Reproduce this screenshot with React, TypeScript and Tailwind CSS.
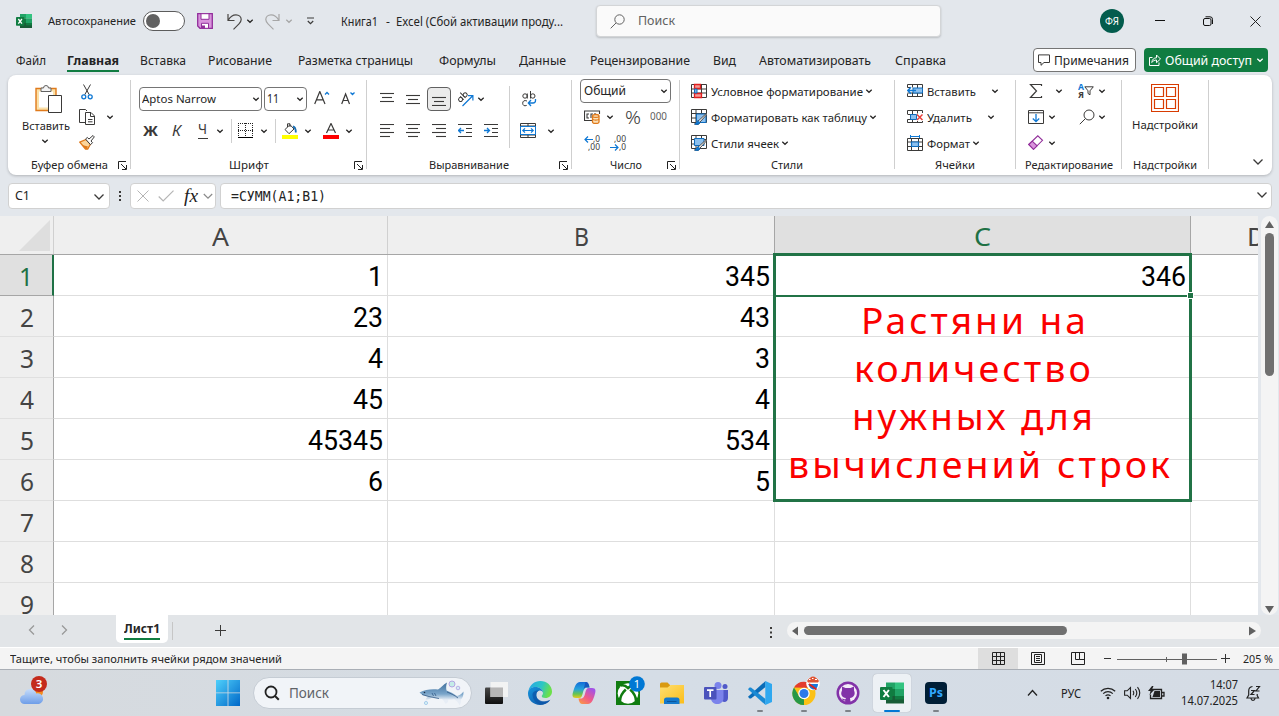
import React, { useLayoutEffect, useRef, useState } from "react";

/** Single-line text whose glyphs are condensed or widened to a given width. */
function Fit({ w, className = "", children }: { w: number; className?: string; children: string }) {
  const ref = useRef<HTMLSpanElement>(null);
  const [scale, setScale] = useState(1);
  useLayoutEffect(() => {
    if (ref.current) setScale(w / parseFloat(getComputedStyle(ref.current).width));
  }, [w]);
  return (
    <span className={"block shrink-0 whitespace-nowrap " + className} style={{ width: w }}>
      <span ref={ref} className="inline-block origin-left" style={{ transform: `scaleX(${scale})` }}>
        {children}
      </span>
    </span>
  );
}

function Icon({ w, h, className = "", children }: { w: number; h: number; className?: string; children: React.ReactNode }) {
  return (
    <svg width={w} height={h} viewBox={`0 0 ${w} ${h}`} fill="none" stroke="#3b3a39" className={"block shrink-0 " + className}>
      {children}
    </svg>
  );
}

const Chev = ({ className = "", c = "#252423" }: { className?: string; c?: string }) => (
  <Icon w={8} h={8} className={className}>
    <path d="M1.3 2.7 4 5.3 6.7 2.7" stroke={c} strokeWidth="1.2" />
  </Icon>
);
const BigChev = ({ className = "" }: { className?: string }) => (
  <Icon w={12} h={8} className={className}>
    <path d="M1.5 1.5 6 6l4.5-4.5" strokeWidth="1.3" />
  </Icon>
);
const Launcher = () => (
  <Icon w={9} h={9}>
    <path d="M.5 8V.5H8M3 3l5 5M8.5 4v4.5H4" stroke="#222" />
  </Icon>
);
const Sep = () => <div className="mt-[5px] h-[89px] w-px shrink-0 bg-[#cfcfcf]" />;

function Group({ className, label, lw, launcher, children }: { className: string; label: string; lw: number; launcher?: boolean; children: React.ReactNode }) {
  return (
    <>
      <section className={"flex h-[100px] shrink-0 flex-col " + className}>
        <div className="h-[80px]">{children}</div>
        <div className="flex h-[20px] items-center">
          <div className="flex flex-1 justify-center">
            <Fit w={lw} className="text-[11.5px] leading-[20px]">{label}</Fit>
          </div>
          {launcher && <div className="-ml-[12px] w-[12px]"><Launcher /></div>}
        </div>
      </section>
      <Sep />
    </>
  );
}

const Save = () => (
  <Icon w={16} h={16} className="ml-[12px]">
    <path d="M.7.7h14.6v14.6H3L.7 13z" fill="#d994dc" stroke="#922f9b" strokeWidth="1.3" />
    <path d="M4 .7h8v5.6H4z" fill="#fff" stroke="#922f9b" />
    <path d="M4.5 15.3v-5h7v5z" fill="#fff" stroke="#922f9b" />
    <path d="M5 12.5h3v3H5z" fill="#922f9b" stroke="none" />
  </Icon>
);
const Undo = ({ flip = false, c }: { flip?: boolean; c: string }) => (
  <Icon w={15} h={17} className={flip ? "ml-[11px] -scale-x-100" : "ml-[14px]"}>
    <path d="M1 1v6.5h6.5M1.2 7.2C3 4 6 1.800 9 1.800c3 0 5.200 2 5.200 4.800 0 2-1 3-2.200 4.200L6.500 16.300" stroke={c} strokeWidth="1.2" />
  </Icon>
);
const ExcelLogo = ({ s, className = "" }: { s: number; className?: string }) => (
  <svg width={s} height={s} viewBox="0 0 24 24" className={"block shrink-0 " + className}>
    <path d="M6 1.500h9V8H6z" fill="#21a366" />
    <path d="M15 1.500h9V8h-9z" fill="#33c481" />
    <path d="M6 8h9v7H6z" fill="#107c41" />
    <path d="M15 8h9v7h-9z" fill="#21a366" />
    <path d="M6 15h18v7.500H6z" fill="#185c37" />
    <path d="M15 15h9v3.500h-9z" fill="#107c41" />
    <rect y="6" width="12.500" height="13" rx="1" fill="#107c41" />
    <path d="m3.500 9 5.400 7M8.900 9 3.500 16" stroke="#fff" strokeWidth="2" />
  </svg>
);

function TitleBar() {
  return (
    <header className="flex h-[42px] shrink-0 items-center pl-[16px]">
      <ExcelLogo s={16} />
      <Fit w={88} className="ml-[16px] text-[11.5px]">Автосохранение</Fit>
      <div className="ml-[7px] flex h-[20px] w-[42px] items-center rounded-full border border-[#5c5c5c] bg-white pl-[2px]">
        <div className="size-[14px] rounded-full bg-[#616161]" />
      </div>
      <Save />
      <Undo c="#484644" />
      <Chev className="ml-[4px]" />
      <Undo flip c="#a6a6a6" />
      <Chev className="ml-[5px]" c="#a6a6a6" />
      <Icon w={9} h={8} className="ml-[13px]">
        <path d="M1 1h7M1.800 4 4.500 6.700 7.200 4" strokeWidth="1.200" />
      </Icon>
      <Fit w={37} className="ml-[26px] pt-px text-[12px]">Книга1</Fit>
      <span className="ml-[8px] pt-px text-[12px]">-</span>
      <Fit w={167} className="ml-[6px] pt-px text-[12px]">Excel (Сбой активации проду...</Fit>
      <div className="mr-[159px] ml-auto flex h-[32px] w-[345px] items-center rounded-[4px] border border-[#d3d5d7] bg-[#fafafa] pl-[13px] shadow-[0_1px_2px_rgba(0,0,0,0.18)]">
        <Icon w={15} h={15}>
          <circle cx="9.500" cy="5.500" r="4.700" stroke="#616161" />
          <path d="M6 9 .7 14.300" stroke="#616161" />
        </Icon>
        <Fit w={37} className="ml-[13px] pt-px text-[12.5px] text-[#616161]">Поиск</Fit>
      </div>
      <div className="flex size-[24px] items-center justify-center rounded-full bg-[#035c4d]">
        <Fit w={14} className="text-[10px] text-white">ФЯ</Fit>
      </div>
      <Icon w={10} h={10} className="ml-[31px]"><path d="M0 4.500h10" stroke="#111" /></Icon>
      <Icon w={10} h={10} className="ml-[38px]">
        <rect x=".5" y="2.500" width="7.500" height="7" rx="1.500" stroke="#111" />
        <path d="M2.500.8H7A2.500 2.500 0 0 1 9.500 3.300V8" stroke="#111" />
      </Icon>
      <Icon w={11} h={11} className="mr-[18px] ml-[37px]"><path d="m.5.5 10 10M10.500.5l-10 10" stroke="#222" /></Icon>
    </header>
  );
}

function Tabs() {
  return (
    <nav className="flex h-[33px] shrink-0 items-start pl-[16px] text-[12px] leading-[18px]">
      <div className="mt-[10px] flex">
        <Fit w={30}>Файл</Fit>
        <div className="ml-[21px] h-[20px] border-b-2 border-[#107c41] font-bold"><Fit w={52}>Главная</Fit></div>
        <Fit w={46} className="ml-[21px]">Вставка</Fit>
        <Fit w={64} className="ml-[22px]">Рисование</Fit>
        <Fit w={115} className="ml-[26px]">Разметка страницы</Fit>
        <Fit w={57} className="ml-[26px]">Формулы</Fit>
        <Fit w={47} className="ml-[23px]">Данные</Fit>
        <Fit w={100} className="ml-[24px]">Рецензирование</Fit>
        <Fit w={23} className="ml-[23px]">Вид</Fit>
        <Fit w={112} className="ml-[23px]">Автоматизировать</Fit>
        <Fit w={51} className="ml-[24px]">Справка</Fit>
      </div>
      <div className="mt-[6px] mr-[11px] ml-auto flex gap-[8px]">
        <div className="flex h-[24px] w-[103px] items-center rounded-[4px] border border-[#757575] bg-white pl-[4px]">
          <Icon w={12} h={12}><path d="M.5.900h11v7.600H6L3 11.300V8.500H.5z" /></Icon>
          <Fit w={75} className="ml-[4px] pt-px text-[12.5px]">Примечания</Fit>
        </div>
        <div className="flex h-[24px] w-[124px] items-center rounded-[4px] bg-[#107c41] pl-[5px] text-white">
          <Icon w={12} h={12}>
            <path d="M3.500 3.500h-3v8h9.500v-3M2.800 8.500C3 5.500 5 3.800 7.500 3.800V1l4 4-4 3.700V6C5.500 6 4 6.800 2.800 8.500z" stroke="#fff" />
          </Icon>
          <Fit w={87} className="ml-[4px] pt-px text-[12.5px]">Общий доступ</Fit>
          <Chev className="ml-[4px]" c="#fff" />
        </div>
      </div>
    </nav>
  );
}

const Lines = ({ rows, className = "" }: { rows: number[][]; className?: string }) => (
  <Icon w={14} h={14} className={className}>
    {rows.map(([y, a, b], i) => <path key={i} d={`M${a} ${y}.5H${b}`} strokeWidth="1.100" />)}
  </Icon>
);

function Clipboard() {
  return (
    <Group className="w-[122px]" label="Буфер обмена" lw={77} launcher>
      <div className="flex">
        <div className="flex w-[65px] flex-col items-end pt-[9px]">
          <Icon w={28} h={30} className="mr-[10px]">
            <path d="M1 4.500h20v22H1z" fill="#fbe1a8" stroke="#e07a1b" strokeWidth="1.400" />
            <path d="M4 7.500h14v16H4z" fill="#fff" stroke="none" />
            <path d="M6 7.500V4h2.500a2.500 2.500 0 0 1 5 0H16v3.500z" fill="#f4f4f4" stroke="#616161" />
            <path d="M13.500 11.500h13v17h-13z" fill="#fff" />
          </Icon>
          <Fit w={48} className="mt-[3px] mr-[3px] text-[11.5px] leading-[18px]">Вставить</Fit>
          <Chev className="mt-[2px] mr-[24px]" />
        </div>
        <div className="flex flex-col pt-[9px] pl-[6px]">
          <Icon w={16} h={16}>
            <path d="m4.500.5 5.800 10.300M11.500.5 5.700 10.800" />
            <circle cx="4.800" cy="12.800" r="2" stroke="#0f78d4" strokeWidth="1.300" />
            <circle cx="11.200" cy="12.800" r="2" stroke="#0f78d4" strokeWidth="1.300" />
          </Icon>
          <div className="mt-[9px] flex items-center">
            <Icon w={16} h={16}>
              <path d="M6 13.500H.5V.5h6L8 2" />
              <path d="M6.500 3.500h5.500l3.500 3.500v8.500h-9zM11.500 4v3.500h4M9 10.500h4.500M9 12.800h4.500" />
            </Icon>
            <Chev className="ml-[11px]" />
          </div>
          <Icon w={16} h={15} className="mt-[10px]">
            <path d="M.8 7.200 7 4.500l4.500 4.500-2.800 5L6.500 14z" fill="#fbd59b" stroke="#e07a1b" strokeWidth="1.300" />
            <path d="m3 10 6 1.500-1.500 3z" fill="#e07a1b" stroke="none" />
            <path d="m6.500 4 1.800-1.500L10 4l4-3.500 1.300 1.400L12 6l1.500 1.700-2 2z" fill="#fff" />
          </Icon>
        </div>
      </div>
    </Group>
  );
}

function FontGroup() {
  return (
    <Group className="w-[235px]" label="Шрифт" lw={40} launcher>
      <div className="flex items-center pt-[12px] pl-[8px]">
        <div className="flex h-[24px] w-[123px] items-center justify-between rounded-[4px] border border-[#757575] pr-[1px] pl-[2px]">
          <Fit w={74} className="text-[11.5px]">Aptos Narrow</Fit><Chev />
        </div>
        <div className="ml-[2px] flex h-[24px] w-[43px] items-center justify-between rounded-[4px] border border-[#757575] pr-[2px] pl-[2px]">
          <Fit w={12} className="text-[12px]">11</Fit><Chev />
        </div>
        <Icon w={16} h={16} className="ml-[7px]">
          <path d="M.7 13 5.800.500 11 13M2.500 8.800h6.700" strokeWidth="1.200" />
          <path d="m11 3.500 2-2 2 2" stroke="#0f78d4" strokeWidth="1.300" />
        </Icon>
        <Icon w={15} h={16} className="ml-[11px]">
          <path d="M.7 13 4.600 3 8.500 13M2 9.500h5.300" strokeWidth="1.200" />
          <path d="m9.500 1.500 2 2 2-2" stroke="#0f78d4" strokeWidth="1.300" />
        </Icon>
      </div>
      <div className="mt-[8px] flex h-[24px] items-center pl-[12px] text-[14px] text-[#3b3a39]">
        <Fit w={15} className="mb-[2px] font-bold">Ж</Fit>
        <Fit w={9} className="mb-[2px] ml-[14px] italic">К</Fit>
        <div className="ml-[17px] h-[16px] w-[10px] border-b border-[#3b3a39]"><Fit w={9} className="text-[14px] leading-[11px]">Ч</Fit></div>
        <Chev className="ml-[8px]" />
        <div className="ml-[7px] h-[24px] w-px bg-[#cfcfcf]" />
        <Icon w={16} h={16} className="ml-[6px]">
          <path d="M0 .5h16M.5 0v15M14.500 0v15M7.500 0v15M0 7.500h16" strokeDasharray="1 1" stroke="#222" />
          <path d="M0 14.500h15" stroke="#000" />
        </Icon>
        <Chev className="ml-[6px]" />
        <div className="ml-[7px] h-[24px] w-px bg-[#cfcfcf]" />
        <Icon w={16} h={16} className="ml-[6px]">
          <path d="m3 6.500 5-4.800 4 4.300-5 4.700zM5.500 4V.8h2.500V4" />
          <path d="M11 3.500c2.300.5 2.800 2 2.800 6" stroke="#1a6fb5" strokeWidth="1.800" />
          <path d="M0 12h16v4H0z" fill="#ffff00" stroke="none" />
        </Icon>
        <Chev className="ml-[6px]" />
        <Icon w={16} h={16} className="ml-[11px]">
          <path d="M3.500 10 8 .5 12.500 10M5 7h6" strokeWidth="1.200" />
          <path d="M0 12h16v4H0z" fill="#f00" stroke="none" />
        </Icon>
        <Chev className="ml-[6px]" />
      </div>
    </Group>
  );
}

const Indent = ({ out = false, className }: { out?: boolean; className: string }) => (
  <Icon w={14} h={14} className={className}>
    <path d="M0 .5h14M8 4.500h6M8 8.500h6M0 12.500h14" />
    <path d={out ? "M6 6.500H.5M3 4 .5 6.500 3 9" : "M0 6.500h5.500M3 4l2.500 2.500L3 9"} stroke="#0f78d4" strokeWidth="1.300" />
  </Icon>
);

function Alignment() {
  return (
    <Group className="w-[204px]" label="Выравнивание" lw={80} launcher>
      <div className="flex">
        <div className="w-[142px]">
          <div className="mt-[12px] flex h-[24px] items-center pl-[13px]">
            <Lines rows={[[1, 0, 14], [5, 2, 12], [9, 0, 14]]} />
            <Lines className="ml-[12px]" rows={[[3, 0, 14], [7, 2, 12], [11, 0, 14]]} />
            <div className="ml-[7px] flex size-[24px] items-center justify-center rounded-[4px] border border-[#616161] bg-[#ebebeb]">
              <Lines rows={[[5, 0, 14], [9, 2, 12], [13, 0, 14]]} />
            </div>
            <Icon w={17} h={16} className="ml-[6px]">
              <g transform="rotate(-45 5 7)">
                <circle cx="3" cy="7" r="2" /><path d="M5 4.500V9.500M7.500 2v7.500" /><circle cx="9.500" cy="7" r="2" />
              </g>
              <path d="M5.500 15 15.500 5M11 4.600h4.900V9.500" stroke="#0f78d4" strokeWidth="1.200" />
            </Icon>
            <Chev className="ml-[3px]" />
          </div>
          <div className="mt-[8px] flex h-[24px] items-center pl-[13px]">
            <Lines rows={[[0, 0, 14], [4, 0, 10], [8, 0, 14], [12, 0, 10]]} />
            <Lines className="ml-[12px]" rows={[[0, 0, 14], [4, 2, 12], [8, 0, 14], [12, 2, 12]]} />
            <Lines className="ml-[12px]" rows={[[0, 0, 14], [4, 4, 14], [8, 0, 14], [12, 4, 14]]} />
            <Indent out className="ml-[12px]" />
            <Indent className="ml-[12px]" />
          </div>
        </div>
        <div className="mt-[11px] h-[62px] w-px bg-[#cfcfcf]" />
        <div className="pl-[10px]">
          <Icon w={16} h={16} className="mt-[16px] ml-[2px]">
            <circle cx="3" cy="5" r="2.200" /><path d="M5.300 2.500v5M8.500 0v7.500M5 10c-2.800-1.200-4.300.2-4.300 2.200 0 2 1.500 3.300 4 2.200" /><circle cx="10.800" cy="5" r="2.200" />
            <path d="M13.500 8v1.500c0 1.500-1 2.500-2.500 2.500H6.500M9 9l-2.700 3L9 15" stroke="#0f78d4" strokeWidth="1.300" />
          </Icon>
          <div className="mt-[16px] flex items-center">
            <Icon w={16} h={15}>
              <path d="M.5.5h15v14H.5zM.5 3h15M.5 12h15M8 .5V3M8 12v2.500" />
              <path d="M.5 3.500h15v8H.5z" fill="#fff" stroke="#0f78d4" />
              <path d="M3 7.500h10M5 5.300 2.800 7.500 5 9.700M11 5.300l2.200 2.200L11 9.700" stroke="#0f78d4" strokeWidth="1.200" />
            </Icon>
            <Chev className="ml-[11px]" />
          </div>
        </div>
      </div>
    </Group>
  );
}

const Decimal = ({ more, className = "" }: { more?: boolean; className?: string }) => (
  <div className={"flex w-[17px] shrink-0 flex-col items-end text-[9px] leading-[8px] text-[#3b3a39] " + className}>
    <div className="flex h-[8px] items-center">
      {more && <Icon w={9} h={7}><path d="M9 3.500H1M4 .5l-3 3 3 3" stroke="#0f78d4" strokeWidth="1.200" /></Icon>}
      <Fit w={more ? 7 : 12}>{more ? ",0" : ",00"}</Fit>
    </div>
    <div className="flex h-[8px] items-center">
      {!more && <Icon w={9} h={7}><path d="M0 3.500h8M5 .5l3 3-3 3" stroke="#0f78d4" strokeWidth="1.200" /></Icon>}
      <Fit w={more ? 12 : 7}>{more ? ",00" : ",0"}</Fit>
    </div>
  </div>
);

function NumberGroup() {
  return (
    <Group className="w-[107px]" label="Число" lw={32} launcher>
      <div className="mt-[4px] ml-[8px] flex h-[24px] w-[91px] items-center justify-between rounded-[4px] border border-[#757575] pr-[2px] pl-[3px]">
        <Fit w={42} className="text-[12px]">Общий</Fit><Chev />
      </div>
      <div className="flex h-[28px] items-center pl-[12px]">
        <Icon w={17} h={14}>
          <path d="M8 10.500H.5V1h15v3M5 4H3v4h2M7 8V4h2M11 4.500V3" strokeWidth="1.100" />
          <path d="M8.500 6c0-2 6.500-2 6.500 0v6c0 2-6.500 2-6.500 0z" fill="#fbe1b8" stroke="#e07a1b" strokeWidth="1.300" />
          <path d="M8.500 6.300c1 1.500 5.500 1.500 6.500 0M8.500 9c1 1.500 5.500 1.500 6.500 0" stroke="#e07a1b" strokeWidth="1.200" />
        </Icon>
        <Chev className="ml-[5px]" />
        <Fit w={16} className="ml-[11px] text-[19px] leading-[20px] font-light text-[#3b3a39]">%</Fit>
        <Fit w={17} className="ml-[9px] text-[10.5px] text-[#616161]">000</Fit>
      </div>
      <div className="flex h-[24px] items-center pl-[11px]">
        <Decimal more />
        <Decimal className="ml-[9px]" />
      </div>
    </Group>
  );
}

function TableIcon({ kind }: { kind: "cond" | "table" | "cell" | "ins" | "del" | "fmt" }) {
  const blue = "#0f6cbd";
  return (
    <Icon w={16} h={16}>
      {kind === "cond" && <>
        <path d="M.5 1.500h15v13H.5zM.5 6h15M.5 10h15M10.500 1.500v13M5.500 1.500v13" />
        <path d="M3.500 1.500h6v4h-6zM3.500 10.500h7v4h-7z" fill="#f59a95" stroke="#e02020" strokeWidth="1.300" />
        <path d="M6 6v4H3.500V6z" fill="#7db4e8" stroke={blue} />
      </>}
      {(kind === "table" || kind === "cell") && <>
        <path d="M.5.5h15v13H.5zM.5 4.500h15M.5 9h6M5 .5v13M10.500.5v4" />
        <path d={kind === "table" ? "M5.500 5h9.500v8.500H5.500z" : "M3.500 3.500h9.500v7H3.500z"} fill="#8cc0ee" stroke={blue} />
        <path d="m15.300 4.500-7 6.500-1.300 1c-2 0-1.500 2.500-3.500 3 2.500 1 5.500.5 5.500-2l6.800-7.500z" fill="#fff" stroke="#484644" />
        <path d="M7.300 12c-2 0-1.500 2.500-3.500 3 2.500.9 4.800.2 5-1.600z" fill="#0f78d4" stroke={blue} />
      </>}
      {kind === "ins" && <>
        <path d="M.5 4.500v-3h15v12H.5v-3M.5 10h15M5.500 1.500v3M10.500 1.500v12M5.500 9.500v4M.5 4.500H3" />
        <path d="M6 5h9.500v5H6z" fill="#8cc0ee" stroke={blue} />
        <path d="M9 7.500H1M4 4.300.8 7.500 4 10.700" stroke="#0f78d4" strokeWidth="1.400" />
      </>}
      {kind === "del" && <>
        <path d="M.5 5V1.500h15V4M.5 10.500v3h15V12M.5 5.500H5M.5 10.500H5M5.500 1.500v4M5.500 10.500v3M10.500 1.500v3M10.500 12v2" />
        <path d="M3.500 5.500h6v5h-6z" fill="#8cc0ee" stroke={blue} />
        <path d="m10 5.500 5.500 5.500M15.500 5.500 10 11" stroke="#e8403c" strokeWidth="1.500" />
      </>}
      {kind === "fmt" && <>
        <path d="M.5 3.500h15v12H.5zM.5 7h15M.5 11.500h15M4.500 3.500v12M11.500 3.500v12" />
        <path d="M4.500 7h7v4.500h-7z" fill="#8cc0ee" stroke={blue} strokeWidth="1.200" />
        <path d="M3.500 1.500h9M3.500 0v3M12.500 0v3" stroke="#0f78d4" />
      </>}
    </Icon>
  );
}

const Command = ({ kind, w, text, far }: { kind: "cond" | "table" | "cell" | "ins" | "del" | "fmt"; w: number; text: string; far?: boolean }) => (
  <div className="flex h-[26px] items-center">
    <TableIcon kind={kind} />
    <Fit w={w} className="ml-[4px] pt-px text-[11.5px]">{text}</Fit>
    <Chev className={far ? "ml-[15px]" : "ml-[2px]"} />
  </div>
);

function Ribbon() {
  return (
    <div className="mr-[7px] ml-[8px] flex h-[100px] shrink-0 rounded-[8px] bg-white shadow-[0_1px_3px_rgba(0,0,0,0.22)]">
      <Clipboard />
      <FontGroup />
      <Alignment />
      <NumberGroup />
      <Group className="w-[214px]" label="Стили" lw={32}>
        <div className="pt-[3px] pl-[11px]">
          <Command kind="cond" w={152} text="Условное форматирование" />
          <Command kind="table" w={156} text="Форматировать как таблицу" />
          <Command kind="cell" w={68} text="Стили ячеек" />
        </div>
      </Group>
      <Group className="w-[120px]" label="Ячейки" lw={40}>
        <div className="pt-[3px] pl-[12px]">
          <Command kind="ins" w={49} text="Вставить" far />
          <Command kind="del" w={45} text="Удалить" far />
          <Command kind="fmt" w={43} text="Формат" />
        </div>
      </Group>
      <Group className="w-[105px]" label="Редактирование" lw={88}>
        <div className="pt-[3px] pl-[12px]">
          <div className="flex h-[26px] items-center">
            <Icon w={16} h={16}><path d="M13.500 3V1.500H2.500l6 6.500-6 6.500h11V13" strokeWidth="1.200" /></Icon>
            <Chev className="ml-[11px]" />
            <div className="ml-[15px] flex w-[16px]">
              <div className="flex flex-col text-[9px] leading-[8px] font-bold text-[#3b3a39]">
                <Fit w={6} className="h-[8px] text-[#0f78d4]">А</Fit><Fit w={6} className="h-[8px]">Я</Fit>
              </div>
              <Icon w={10} h={11} className="mt-[3px]"><path d="M.8.800h8.500L6 4.800v4L4 7.500V4.800z" /></Icon>
            </div>
            <Chev className="ml-[4px]" />
          </div>
          <div className="flex h-[26px] items-center">
            <Icon w={16} h={14}>
              <path d="M.5.500h15v13H.5zM.5 2.800h15" />
              <path d="M8 4v7.500M4.800 8.500 8 11.700l3.200-3.200" stroke="#0f78d4" strokeWidth="1.300" />
            </Icon>
            <Chev className="ml-[4px]" />
            <Icon w={16} h={16} className="ml-[23px]"><circle cx="10" cy="6" r="5" /><path d="M6.500 9.500.8 15.200" /></Icon>
            <Chev className="ml-[3px]" />
          </div>
          <div className="flex h-[26px] items-center">
            <Icon w={16} h={16}>
              <path d="M.8 9.500 9.800.800l4.700 4.500-9 9z" fill="#fff" stroke="#922f9b" strokeWidth="1.100" />
              <path d="m.8 9.500 3.500-3.300 4.800 4.600-3.600 3.500z" fill="#d994dc" stroke="#922f9b" strokeWidth="1.100" />
            </Icon>
            <Chev className="ml-[4px]" />
          </div>
        </div>
      </Group>
      <Group className="w-[86px]" label="Надстройки" lw={64}>
        <div className="flex flex-col items-center pt-[9px]">
          <Icon w={28} h={28}>
            <path d="M.5.500h27v27H.5zM3.500 3.500h9v9h-9zM15.500 3.500h9v9h-9zM3.500 15.500h9v9h-9zM15.500 15.500h9v9h-9z" stroke="#d83b01" strokeWidth="1.200" />
          </Icon>
          <Fit w={66} className="mt-[4px] text-[11.5px] leading-[18px]">Надстройки</Fit>
        </div>
      </Group>
      <BigChev className="mt-[83px] mr-[8px] ml-auto" />
    </div>
  );
}

function FormulaBar() {
  const box = "flex h-[26px] items-center rounded-[4px] border border-[#d1d1d1] bg-white ";
  return (
    <div className="mt-[8px] flex h-[33px] shrink-0 items-start pl-[8px]">
      <div className={box + "w-[102px] justify-between pr-[4px] pl-[6px]"}>
        <Fit w={15} className="text-[12.5px]">C1</Fit><BigChev className="mt-[2px]" />
      </div>
      <Icon w={4} h={12} className="mt-[7px] ml-[8px]"><path d="M1 1h2v2H1zM1 5h2v2H1zM1 9h2v2H1z" fill="#3b3a39" stroke="none" /></Icon>
      <div className={box + "ml-[8px] w-[86px] pl-[6px]"}>
        <Icon w={12} h={12}><path d="m.5.500 11 11M11.500.500l-11 11" stroke="#b5b5b5" /></Icon>
        <Icon w={16} h={12} className="ml-[9px]"><path d="m.7 6.500 4.500 4.500L15.500.700" stroke="#b5b5b5" strokeWidth="1.200" /></Icon>
        <Fit w={14} className="ml-[10px] font-['Liberation_Serif',serif] text-[18px] leading-[18px] text-[#222] italic">fx</Fit>
        <Icon w={10} h={8} className="ml-[5px]"><path d="m.8 2 4.200 4.200L9.200 2" stroke="#8a8a8a" strokeWidth="1.200" /></Icon>
      </div>
      <div className={box + "ml-[4px] w-[1052px] justify-between pr-[3px] pl-[10px]"}>
        <Fit w={95} className="font-['DejaVu_Sans_Mono',monospace] text-[13.5px]">=СУММ(A1;B1)</Fit>
        <BigChev className="mb-[2px]" />
      </div>
    </div>
  );
}

const DATA = [["1", "345", "346"], ["23", "43", ""], ["4", "3", ""], ["45", "4", ""], ["45345", "534", ""], ["6", "5", ""], ["", "", ""], ["", "", ""], ["", "", ""]];

function Cell({ v, className }: { v: string; className: string }) {
  return (
    <div className={"flex h-[41px] shrink-0 items-center justify-end border-r border-b border-[#dedede] pr-[4px] font-[Roboto,sans-serif] text-[28px] leading-[41px] text-black " + className}>
      {v && <Fit w={v.length * 15} className="pt-[3px]">{v}</Fit>}
    </div>
  );
}

function Sheet() {
  const head = "flex shrink-0 items-center justify-center border-r pt-[3px] ";
  return (
    <div className="relative h-[399px] w-[1258px] shrink-0 overflow-hidden bg-white">
      <div className="flex h-[39px] border-b border-[#a6a6a6] bg-[#efefef] text-[26px] text-[#444]">
        <div className="flex w-[54px] shrink-0 items-center justify-end border-r border-[#d0d0d0] pr-[3px]">
          <Icon w={31} h={31}><path d="M31 0v31H0z" fill="#dedede" stroke="none" /></Icon>
        </div>
        <div className={head + "w-[334px] border-[#d0d0d0]"}><Fit w={17}>A</Fit></div>
        <div className={head + "w-[387px] border-[#a6a6a6]"}><Fit w={15}>B</Fit></div>
        <div className={head + "w-[416px] border-[#a6a6a6] bg-[#e0e0e0] text-[#1e7145]"}><Fit w={17}>C</Fit></div>
        <div className="flex items-center pt-[3px] pl-[56px]"><Fit w={19}>D</Fit></div>
      </div>
      {DATA.map((row, i) => (
        <div key={i} className="flex">
          <div className={"flex h-[41px] w-[54px] shrink-0 items-center justify-center border-b text-[26px] leading-[41px] " + (i === 0 ? "border-r-2 border-r-[#1e7145] border-b-[#a6a6a6] bg-[#e0e0e0] text-[#1e7145]" : "border-r border-r-[#a6a6a6] border-b-[#e0e0e0] bg-[#efefef] text-[#444]")}>
            <Fit w={14} className="pt-[2px]">{String(i + 1)}</Fit>
          </div>
          <Cell v={row[0]} className="w-[334px]" />
          <Cell v={row[1]} className="w-[387px]" />
          <Cell v={row[2]} className="w-[416px]" />
          <Cell v="" className="w-[68px]" />
        </div>
      ))}
      <div className="absolute top-[37px] left-[773px] h-[249px] w-[419px] border-[3px] border-[#217346]">
        <div className="h-[41px] w-[411px] border-b-2 border-[#217346]" />
        <div className="absolute top-[36px] -right-[5px] size-[7px] border border-white bg-[#217346]" />
        <div className="-mt-[1px] flex flex-col items-start text-[37px] leading-[48px] tracking-[3px] text-[#fb0000]">
          <Fit w={228} className="ml-[85px]">Растяни на</Fit>
          <Fit w={240} className="ml-[78px]">количество</Fit>
          <Fit w={244} className="ml-[76px]">нужных для</Fit>
          <Fit w={385} className="ml-[12px]">вычислений строк</Fit>
        </div>
      </div>
    </div>
  );
}

function SheetTabs() {
  return (
    <div className="flex h-[32px] shrink-0 items-start bg-[#e2e5e8]">
      <Icon w={8} h={10} className="mt-[10px] ml-[28px]"><path d="M6 .500 1.500 5 6 9.500" stroke="#999" strokeWidth="1.300" /></Icon>
      <Icon w={8} h={10} className="mt-[10px] ml-[24px]"><path d="M2 .500 6.500 5 2 9.500" stroke="#999" strokeWidth="1.300" /></Icon>
      <div className="ml-[48px] flex h-[28px] w-[52px] justify-center rounded-b-[5px] bg-white">
        <div className="h-[25px] border-b-2 border-[#107c41] text-[12.5px] leading-[27px] font-bold text-[#262626]"><Fit w={36}>Лист1</Fit></div>
      </div>
      <div className="mt-[7px] ml-[4px] h-[18px] w-px bg-[#c6c6c6]" />
      <Icon w={11} h={11} className="mt-[10px] ml-[42px]"><path d="M5.500 0v11M0 5.500h11" /></Icon>
      <Icon w={2} h={11} className="mt-[12px] ml-auto"><path d="M0 0h2v2H0zM0 4.500h2v2H0zM0 9h2v2H0z" fill="#3b3a39" stroke="none" /></Icon>
      <div className="mt-[7px] mr-[18px] ml-[15px] flex h-[17px] w-[474px] items-center rounded-full bg-[#f4f4f4] pr-[5px] pl-[5px]">
        <Icon w={6} h={10}><path d="M6 .500v9L0 5z" fill="#616161" stroke="none" /></Icon>
        <div className="ml-[6px] h-[9px] w-[263px] rounded-full bg-[#707070]" />
        <Icon w={7} h={10} className="ml-auto"><path d="M0 .500v9L7 5z" fill="#616161" stroke="none" /></Icon>
      </div>
    </div>
  );
}

function StatusBar() {
  return (
    <div className="flex h-[23px] shrink-0 items-center border-t border-b border-t-white border-b-[#a9aeb5] bg-[#f4f4f4] pl-[10px] text-[11.5px]">
      <Fit w={272} className="pt-px">Тащите, чтобы заполнить ячейки рядом значений</Fit>
      <div className="ml-auto flex h-full w-[40px] items-center justify-center bg-[#dedede]">
        <Icon w={13} h={13}><path d="M.5.500h12v12H.5zM.5 4.500h12M.5 8.500h12M4.500.500v12M8.500.500v12" stroke="#222" /></Icon>
      </div>
      <Icon w={14} h={13} className="ml-[13px]"><path d="M.5.500h13v12H.5zM3.500 2.500h7v8h-7zM5 4.500h4M5 6.500h4M5 8.500h4" stroke="#222" /></Icon>
      <Icon w={14} h={13} className="ml-[26px]"><path d="M.5.500h13v12H.5zM4.500.500v7h4v-7M8.500 7.500h5" stroke="#222" /></Icon>
      <Icon w={117} h={13} className="ml-[19px]">
        <path d="M13 7.500h100M62.500 5v5" stroke="#616161" />
        <path d="M78 1.500h5v11h-5z" fill="#616161" stroke="none" />
        <path d="M0 6.500h7" stroke="#333" />
      </Icon>
      <Icon w={9} h={9}><path d="M0 4.500h9M4.500 0v9" stroke="#333" /></Icon>
      <Fit w={30} className="mr-[6px] ml-[13px] pt-px">205 %</Fit>
    </div>
  );
}

function Slot({ children, dot, active }: { children: React.ReactNode; dot?: boolean; active?: boolean }) {
  return (
    <div className="flex h-[46px] w-[44px] shrink-0 flex-col items-center">
      <div className={"mt-[4px] flex h-[38px] w-[38px] flex-col items-center rounded-[4px] pt-[7px] " + (active ? "bg-[#edf1f5] shadow-[0_0_1px_rgba(0,0,0,0.3)]" : "")}>
        {children}
        {dot && <div className="mt-[5px] h-[3px] w-[6px] rounded-full bg-[#7d8288]" />}
        {active && <div className="mt-[5px] h-[3px] w-[16px] rounded-full bg-[#0078d4]" />}
      </div>
    </div>
  );
}

const Pic = ({ children }: { children: React.ReactNode }) => (
  <svg width="24" height="24" viewBox="0 0 24 24" className="block shrink-0 overflow-visible">{children}</svg>
);

function Taskbar() {
  return (
    <footer className="flex h-[46px] shrink-0 items-center bg-[linear-gradient(90deg,#d6dade,#d5dde6_50%,#d5dce5)]">
      <svg width="30" height="30" viewBox="0 0 30 30" className="mb-[5px] ml-[19px] block">
        <defs><linearGradient id="cl" x1="0" y1="0" x2="0" y2="1"><stop stopColor="#c5dcfa" /><stop offset="1" stopColor="#6e9de8" /></linearGradient></defs>
        <circle cx="19" cy="16" r="5" fill="#f58b1e" />
        <path d="M5.500 28a4.500 4.500 0 0 1 0-9 6 6 0 0 1 11.800-1.500A5.300 5.300 0 0 1 20 28z" fill="url(#cl)" />
        <circle cx="20" cy="8" r="8" fill="#c42b1c" />
        <text x="20" y="12.200" textAnchor="middle" fontSize="11.500" fontWeight="600" fill="#fff">3</text>
      </svg>
      <div className="ml-[157px] flex">
        <Slot>
          <svg width="24" height="28" viewBox="0 0 24 28" className="-mt-[3px] block">
            <defs><linearGradient id="wn" x1="0" y1="0" x2="1" y2="1"><stop stopColor="#4fd0fb" /><stop offset="1" stopColor="#0067c8" /></linearGradient></defs>
            <path d="M0 2h11.600v12.500H0zM12.400 2H24v12.500H12.400zM0 15.300h11.600V28H0zM12.400 15.300H24V28H12.400z" fill="url(#wn)" />
          </svg>
        </Slot>
      </div>
      <div className="ml-[3px] flex h-[32px] w-[219px] shrink-0 items-center rounded-full border border-[#c5ccd4] bg-[#f1f4f8] pl-[10px]">
        <Icon w={16} h={16}><circle cx="7" cy="7" r="5.500" stroke="#222" strokeWidth="1.800" /><path d="m11 11 3.800 3.800" stroke="#222" strokeWidth="2" /></Icon>
        <Fit w={40} className="ml-[9px] text-[13.5px] text-[#5f6368]">Поиск</Fit>
        <svg width="46" height="26" viewBox="0 0 46 26" className="ml-[90px] block">
          <defs><linearGradient id="sh" x1="0" y1="0" x2="0" y2="1"><stop stopColor="#3f6f9c" /><stop offset=".5" stopColor="#7aa5ca" /><stop offset=".75" stopColor="#e7edf5" /></linearGradient></defs>
          <path d="M.5 12.500C6 9.500 12 9 19 9.500c3-1.500 5-5 9-7-1 3-1 5.500-.500 8 4 1.500 7.500 3.500 10.500 5.500 2-.500 4-1.500 6.500-4.500.200 4-1 6.500-2.500 8 .300 2.300-.5 4-1.300 6-1.200-3.300-3.200-4.800-5.700-6.300-2 .600-4 .700-6 .500 1 1.500-1 3.500-2.500 4-1-1.500-2-3.500-3.500-4.700-4 0-8-.500-10-1.300L6.500 21c0-1.500.5-3 2.500-4.200-3-.800-6-1.500-8.500-4.300z" fill="url(#sh)" />
          <path d="m13 13 1.500 3M15.500 13l1.500 3M28 12c4 1.500 8 3.500 11 6M3 14.500l7 2 10 2" stroke="#335a86" strokeWidth=".8" fill="none" />
          <circle cx="5.500" cy="12.500" r=".8" fill="#1d2f45" />
          <circle cx="33" cy="4" r="3" fill="#c4ece8" stroke="#b4a5e3" /><circle cx="39" cy="8" r="1.800" fill="#d4edf4" stroke="#b7b1e8" /><circle cx="7" cy="23" r="1.600" fill="#d4f0f4" stroke="#93bde6" strokeWidth=".7" />
        </svg>
      </div>
      <div className="ml-[2px] flex">
        <Slot>
          <Pic>
            <defs><linearGradient id="tv" x1="0" y1="0" x2="0" y2="1"><stop stopColor="#484848" /><stop offset="1" stopColor="#0e0e0e" /></linearGradient></defs>
            <rect x="1" y="6.500" width="18" height="16.500" rx="1" fill="url(#tv)" />
            <path d="M6.500 1H24v15H6.500z" fill="#f3f3f3" opacity=".95" /><path d="M6.500 6.500H19V16H6.500z" fill="#b5b5b5" />
          </Pic>
        </Slot>
        <Slot>
          <Pic>
            <defs>
              <linearGradient id="e1" x1="0" y1="0" x2="1" y2=".3"><stop stopColor="#28a5e8" /><stop offset=".6" stopColor="#2dc6c4" /><stop offset="1" stopColor="#6be04a" /></linearGradient>
              <linearGradient id="e2" x1="0" y1="0" x2="1" y2="1"><stop stopColor="#1695dd" /><stop offset="1" stopColor="#0d4da0" /></linearGradient>
            </defs>
            <path d="M.500 10C1.500 4 6.500 0 12.300 0 19 0 24 4.800 24 10.500c0 4-3 6.500-6.500 6.500-2.600 0-4-1-3.700-2.300.9-1 1.200-1.900 1.200-2.900C15 8.500 11.500 6 7.500 6 4.500 6 2 7.300.500 10z" fill="url(#e1)" />
            <path d="M0 12.500C0 8.500 3 6 7.500 6c4 0 7.500 2.500 7.500 5.800-.500-1.800-2-2.500-3.300-2.300-2.200.3-3.600 2.200-3.400 4.900.3 4 4.200 6.900 8.700 6.400 2-.2 3.700-1 5.300-2C20 22 16.500 24 12.200 24 5.300 24 0 19 0 12.500z" fill="url(#e2)" />
            <path d="M4.500 14c.3 5 4 9 8.500 9.800C17 23.800 20.500 21.500 22.300 18.800c-5.800 3.200-13.500.700-14-4.400-.1-2.500 1-4.200 3-4.900-4-.5-7 1.500-6.800 4.500z" fill="#0c55a8" opacity=".75" />
          </Pic>
        </Slot>
        <Slot>
          <Pic>
            <defs>
              <linearGradient id="c1" x1="0" y1="0" x2="0" y2="1"><stop stopColor="#126bd8" /><stop offset=".45" stopColor="#25a2dc" /><stop offset=".75" stopColor="#67c54f" /><stop offset="1" stopColor="#e8c91c" /></linearGradient>
              <linearGradient id="c2" x1=".7" y1="0" x2="0" y2="1"><stop stopColor="#a353e6" /><stop offset=".5" stopColor="#f05a88" /><stop offset="1" stopColor="#fba13c" /></linearGradient>
            </defs>
            <path d="M17.500 6.500C17 3 16 1 13.500 1H8C4.500 1 3 5 1.500 9.500.2 13.500-.5 17 4 17h3c2.500 0 3-2 3.800-5 .700-3 1.700-5.500 4-5.500z" fill="url(#c1)" />
            <path d="M6.500 17.500C7 21 8 23 10.500 23H16c3.500 0 5-4 6.500-8.500 1.300-4 2-7.500-2.500-7.500h-3c-2.500 0-3 2-3.800 5-.700 3-1.700 5.500-4 5.500z" fill="url(#c2)" />
            <path d="M13.500 1c2.500 0 3.500 2 4 5.500h-3c-1.500 0-2.300.6-3 2L13 3z" fill="#164cb5" opacity=".8" />
          </Pic>
        </Slot>
        <Slot>
          <Pic>
            <path d="M0 0h24v24H0z" fill="#107c10" />
            <circle cx="12" cy="12.500" r="10.300" fill="#fff" />
            <path d="M12 5C9.500 3 6.500 1.800 4.800 3.800 7 4 9.500 6 12 8.300 14.500 6 17 4 19.200 3.800 17.500 1.800 14.500 3 12 5zM8.500 7.500 4 20.500C1 15 3.500 10 8.500 7.500zM15.500 7.500l4.500 13c3-5.500.500-10.500-4.500-13zM12 11.500c-3.500 3-6 6.500-6.500 9.500 4 3 9 3 13 0-.5-3-3-6.500-6.500-9.500z" fill="#107c10" opacity="0" />
            <path d="M4.500 4.500C7 3.800 10 5 12 7c2-2 5-3.200 7.500-2.500M9.800 8.500C6 12 4 16 4 20M14.200 8.500C18 12 20 16 20 20" stroke="#107c10" strokeWidth="2.500" fill="none" />
            <circle cx="21" cy="3" r="7.800" fill="#0078d4" />
            <text x="21" y="7" textAnchor="middle" fontSize="11" fill="#fff">1</text>
          </Pic>
        </Slot>
        <Slot>
          <Pic>
            <defs><linearGradient id="fo" x1="0" y1="0" x2="1" y2="1"><stop stopColor="#ffdf72" /><stop offset="1" stopColor="#fbbd19" /></linearGradient></defs>
            <path d="M0 3a1.500 1.500 0 0 1 1.500-1.500h6L10 4v4H0z" fill="#d99a12" />
            <path d="M0 6.500h7.500L10.500 4H24v18.500H0z" fill="url(#fo)" />
            <path d="M4 23v-4a2.500 2.500 0 0 1 2.500-2.500H17a2.500 2.500 0 0 1 2.500 2.500v4z" fill="#1479cc" /><path d="M7 20.500h9.500" stroke="#0a559b" />
          </Pic>
        </Slot>
        <Slot>
          <Pic>
            <circle cx="14" cy="4.500" r="3.500" fill="#7b83eb" /><circle cx="21" cy="5.500" r="2.500" fill="#5059c9" />
            <path d="M15 9h9v8c0 5-6.500 5-7 1z" fill="#5059c9" /><path d="M7 9h12.500v8c0 8-12.500 8-12.500 0z" fill="#7b83eb" />
            <rect y="6" width="12.500" height="12.500" rx="1" fill="#4b53bc" /><path d="M3 9.200h6.500M6.200 9v7" stroke="#fff" strokeWidth="1.700" />
          </Pic>
        </Slot>
        <Slot dot>
          <Pic>
            <path d="M17.500 0v6L3 17.500H1.500L0 15.800z" fill="#0a6cb8" />
            <path d="M17.500 24v-6L3 6.500H1.500L0 8.200z" fill="#1a8ad4" />
            <path d="M17.300 0 24 3v18l-6.700 3z" fill="#2fa8f0" />
          </Pic>
        </Slot>
        <Slot dot>
          <Pic>
            <circle cx="12" cy="12.500" r="11.500" fill="#fbc116" />
            <path d="M2 6.500a11.500 11.500 0 0 1 20 .300H12z" fill="#e33b2e" /><path d="M2 6.500 7.500 16l4.500 1.500L12 24A11.500 11.500 0 0 1 2 6.500z" fill="#279847" />
            <circle cx="12" cy="12.500" r="5.700" fill="#fff" /><circle cx="12" cy="12.500" r="4.500" fill="#2d79ea" />
            <circle cx="21" cy="2.500" r="6.800" fill="#fff" /><path d="M15 0q6-9 12 0l-1 1.500H16z" fill="#df5535" /><path d="M16.500 3h9.500c0 3-1.500 5-4 5.500-3 0-5-2.500-5.500-5.500z" fill="#1679df" /><path d="m17 3 7.500 5.500" stroke="#db2520" strokeWidth="2" />
            <path d="M17-1.500h1.500M20-2.500h1.500M23-1.500h2" stroke="#fff" />
          </Pic>
        </Slot>
        <Slot dot>
          <Pic>
            <circle cx="12" cy="12" r="11.500" fill="#8232a8" /><circle cx="12" cy="12" r="9" fill="#f4ebf8" />
            <path d="M6 5.500 9.500 7h5L18 5.500v4c2 4-.5 7-4 7.500l.7 5h-5.500v-2.500c-2 .5-3-1-3.500-2 2 .2 2 .8 3.800.8l.4-1.300C6 16.500 4 13.500 6 9.500z" fill="#8232a8" />
          </Pic>
        </Slot>
        <Slot active><ExcelLogo s={24} /></Slot>
        <Slot dot>
          <Pic>
            <rect x="1" y="1" width="22" height="22" rx="4" fill="#001e36" />
            <text x="12" y="16" textAnchor="middle" fontSize="12" fontWeight="700" fill="#31a8ff" textLength="14" lengthAdjust="spacingAndGlyphs">Ps</text>
          </Pic>
        </Slot>
      </div>
      <Icon w={11} h={8} className="mr-[23px] ml-auto"><path d="m1 6.500 4.500-5 4.500 5" stroke="#222" strokeWidth="1.300" /></Icon>
      <Fit w={20} className="pt-px text-[12px] text-[#222]">РУС</Fit>
      <Icon w={16} h={14} className="ml-[19px]">
        <path d="M.8 5.200a10.400 10.400 0 0 1 14.400 0M3.200 7.600a7 7 0 0 1 9.600 0M5.500 9.900a3.700 3.700 0 0 1 5 0" stroke="#222" strokeWidth="1.200" /><circle cx="8" cy="12" r="1.300" fill="#222" stroke="none" />
      </Icon>
      <Icon w={17} h={14} className="ml-[8px]">
        <path d="M.6 4.800h2.600L6.500 1.500v11L3.200 9.200H.6zM9 4.800q1.500 2.200 0 4.400M11.300 3q3 4 0 8M13.500 1.200q4.500 5.800 0 11.600" stroke="#222" strokeWidth="1.100" />
      </Icon>
      <Icon w={17} h={14} className="ml-[7px]">
        <path d="M3 3.500h10.500v9H2.500v-4M14 6.500h2v3.500h-2" stroke="#222" strokeWidth="1.300" /><path d="M6.500 5h5.500v6H4.500z" fill="#222" stroke="none" /><path d="M4 0 0 5h2.500L1.500 9 6 4H3.800L5.500 0z" fill="#222" stroke="none" />
      </Icon>
      <div className="ml-[16px] flex w-[57px] flex-col items-end text-[12px] leading-[16px] text-[#222]">
        <Fit w={28}>14:07</Fit>
        <Fit w={57}>14.07.2025</Fit>
      </div>
      <Icon w={15} h={17} className="mr-[18px] ml-[8px]">
        <path d="M6.500 1.500C4 1.800 2.700 3.500 2.700 6v4L1 13h11.500l-1.300-2.500V9M5 13.500c.3 2.500 3.700 2.500 4 0" stroke="#222" strokeWidth="1.200" /><path d="M5 5.500h3.500L5 9.500h3.500M10 1.500h3.500L10 6h3.500" stroke="#222" strokeWidth="1.200" />
      </Icon>
    </footer>
  );
}

export default function App() {
  return (
    <div className="flex h-[716px] w-[1279px] flex-col overflow-hidden bg-[#e3e7ec] font-['Noto_Sans','Open_Sans',sans-serif] text-[#242424]">
      <TitleBar />
      <Tabs />
      <Ribbon />
      <FormulaBar />
      <div className="flex h-[399px] shrink-0">
        <Sheet />
        <div className="ml-[3px] flex w-[17px] flex-col items-center rounded-full bg-[#f4f4f4] pt-[5px]">
          <Icon w={9} h={7}><path d="M4.500 0 9 7H0z" fill="#616161" stroke="none" /></Icon>
          <div className="mt-[5px] h-[143px] w-[9px] rounded-full bg-[#707070]" />
          <Icon w={9} h={7} className="mt-auto mb-[2px]"><path d="M0 0h9L4.500 7z" fill="#616161" stroke="none" /></Icon>
        </div>
      </div>
      <SheetTabs />
      <StatusBar />
      <Taskbar />
    </div>
  );
}
